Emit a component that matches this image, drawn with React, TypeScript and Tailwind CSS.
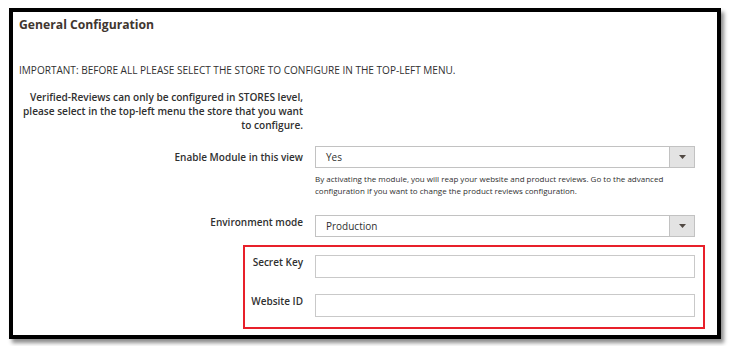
import React from "react";

const font = { fontFamily: '"Open Sans", "Noto Sans", sans-serif' };

function Caret() {
  return (
    <svg width="7" height="4" viewBox="0 0 7 4">
      <path d="M0 0 L7 0 L3.5 4 Z" fill="#514943" />
    </svg>
  );
}

function Select({ value }: { value: string }) {
  return (
    <div className="flex h-[22px] border border-[#c2c2c2] bg-white">
      <div className="flex-1 flex items-center pl-[10px] text-[10px] text-[#303030]">{value}</div>
      <div className="w-[25px] border-l border-[#c2c2c2] bg-[#e3e3e3] flex items-center justify-center">
        <Caret />
      </div>
    </div>
  );
}

export default function App() {
  return (
    <div className="w-[731px] h-[346px] bg-white pl-[9px] pt-[8px]" style={font}>
      <div className="w-[712px] h-[331px] border-[4px] border-black bg-white shadow-[3px_4px_4px_rgba(0,0,0,0.45)] text-[#303030]">
        <div className="pl-[6px] pt-[4px] text-[12.2px] font-bold leading-[18px] text-[#41362f]">General Configuration</div>
        <div className="pl-[6px] mt-[29px] text-[10.05px] leading-[14px] text-[#303030]">
          IMPORTANT: BEFORE ALL PLEASE SELECT THE STORE TO CONFIGURE IN THE TOP-LEFT MENU.
        </div>
        <div className="grid grid-cols-[290px_1fr] gap-x-[12px] pr-[22px] mt-[13px]">
          <div className="text-right text-[10.1px] font-semibold leading-[14px]">
            Verified-Reviews can only be configured in STORES level,
            <br />
            please select in the top-left menu the store that you want
            <br />
            to configure.
          </div>
          <div />
        </div>
        <div className="grid grid-cols-[290px_1fr] gap-x-[12px] pr-[22px] mt-[14px]">
          <div className="text-right text-[10px] font-semibold leading-[22px]">Enable Module in this view</div>
          <div>
            <Select value="Yes" />
            <div className="mt-[5px] text-[8px] leading-[12px] text-[#303030]">
              By activating the module, you will reap your website and product reviews. Go to the advanced
              <br />
              configuration if you want to change the product reviews configuration.
            </div>
          </div>
        </div>
        <div className="grid grid-cols-[290px_1fr] gap-x-[12px] pr-[22px] mt-[18px]">
          <div className="text-right text-[10px] font-semibold leading-[14px]">Environment mode</div>
          <Select value="Production" />
        </div>
        <div className="ml-[230px] mr-[12px] mt-[8px] border-2 border-[#e8202a] pt-[8px] pb-[10px] pr-[8px]">
          <div className="grid grid-cols-[58px_1fr] gap-x-[12px]">
            <div className="text-right text-[10px] font-semibold leading-[14px]">Secret Key</div>
            <div className="h-[23px] border border-[#c9c9c9] bg-white" />
          </div>
          <div className="grid grid-cols-[58px_1fr] gap-x-[12px] mt-[16px]">
            <div className="text-right text-[10px] font-semibold leading-[14px]">Website ID</div>
            <div className="h-[23px] border border-[#c9c9c9] bg-white" />
          </div>
        </div>
      </div>
    </div>
  );
}
